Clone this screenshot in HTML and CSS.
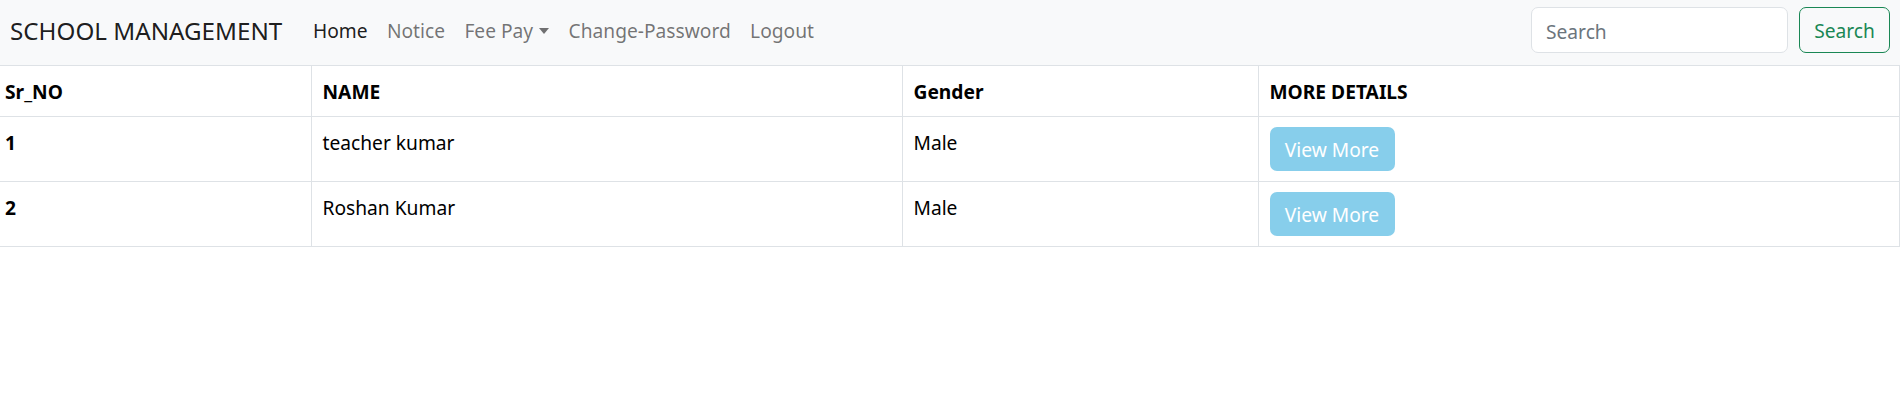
FILE: index.html
```html
<!DOCTYPE html>
<html lang="en">
<head>
<meta charset="utf-8">
<title>School Management</title>
<link rel="stylesheet" href="styles.css">
</head>
<body>
<nav class="navbar">
  <a class="brand" href="#">SCHOOL MANAGEMENT</a>
  <ul class="nav-links">
    <li><a class="nav-link active" href="#">Home</a></li>
    <li><a class="nav-link" href="#">Notice</a></li>
    <li><a class="nav-link dropdown" href="#">Fee Pay<span class="caret"></span></a></li>
    <li><a class="nav-link" href="#">Change-Password</a></li>
    <li><a class="nav-link" href="#">Logout</a></li>
  </ul>
  <form class="search-form">
    <input class="search-input" type="search" placeholder="Search">
    <button class="search-btn" type="button">Search</button>
  </form>
</nav>
<table class="data-table">
  <colgroup>
    <col class="c1"><col class="c2"><col class="c3"><col class="c4">
  </colgroup>
  <thead>
    <tr><th class="first">Sr_NO</th><th>NAME</th><th>Gender</th><th>MORE DETAILS</th></tr>
  </thead>
  <tbody>
    <tr><th class="first">1</th><td>teacher kumar</td><td>Male</td><td class="action"><button class="view-btn" type="button">View More</button></td></tr>
    <tr><th class="first">2</th><td>Roshan Kumar</td><td>Male</td><td class="action"><button class="view-btn" type="button">View More</button></td></tr>
  </tbody>
</table>
</body>
</html>
```

FILE: styles.css
```css
* { box-sizing: border-box; }
html, body { margin: 0; padding: 0; }
body {
  font-family: "Noto Sans", "Open Sans", sans-serif;
  font-size: 19.2px;
  line-height: 1.5;
  color: #212529;
  background: #fff;
}
.navbar {
  display: flex;
  align-items: center;
  height: 65px;
  padding: 7px 10px 12px 10px;
  background: #f8f9fa;
}
.brand {
  font-size: 24.2px;
  color: rgba(0,0,0,.9);
  text-decoration: none;
  margin-right: 21px;
  padding-top: 2px;
}
.nav-links {
  display: flex;
  list-style: none;
  margin: 0;
  padding: 2px 0 0 0;
  flex: 1;
}
.nav-link {
  display: flex;
  align-items: center;
  padding: 0 9.7px;
  color: rgba(0,0,0,.55);
  text-decoration: none;
}
.nav-link.active { color: rgba(0,0,0,.9); }
.caret {
  display: inline-block;
  margin-left: 6px;
  border-top: 6px solid rgba(0,0,0,.55);
  border-left: 5.5px solid transparent;
  border-right: 5.5px solid transparent;
}
.search-form {
  display: flex;
  gap: 11px;
}
.search-input {
  width: 257px;
  height: 46px;
  padding: 2px 14px 0 14px;
  font: inherit;
  color: #212529;
  background: #fff;
  border: 1px solid #dee2e6;
  border-radius: 7px;
  outline: none;
}
.search-input::placeholder { color: #6c757d; }
.search-btn {
  width: 91px;
  height: 46px;
  font: inherit;
  color: #198754;
  background: transparent;
  border: 1px solid #198754;
  border-radius: 7px;
  padding: 2px 0 0 0;
}
.data-table {
  width: 100%;
  border-collapse: collapse;
  table-layout: fixed;
}
.c1 { width: 311px; }
.c2 { width: 591px; }
.c3 { width: 356px; }
.data-table th, .data-table td {
  border: 1px solid #dee2e6;
  text-align: left;
  vertical-align: top;
  padding: 12px 11px 8px 11px;
  line-height: 28.8px;
  color: #000;
}
.data-table thead th { font-weight: 700; padding-top: 12px; padding-bottom: 9px; }
.data-table tr > :first-child { border-left: 0; }
.data-table .first { padding-left: 5px; font-weight: 700; }
.data-table td.action { padding-top: 10px; padding-bottom: 10px; }
.view-btn {
  display: block;
  width: 125px;
  height: 44px;
  font: inherit;
  color: #fff;
  background: #87ceeb;
  border: 0;
  border-radius: 7px;
  padding: 3px 0 0 0;
}
```
